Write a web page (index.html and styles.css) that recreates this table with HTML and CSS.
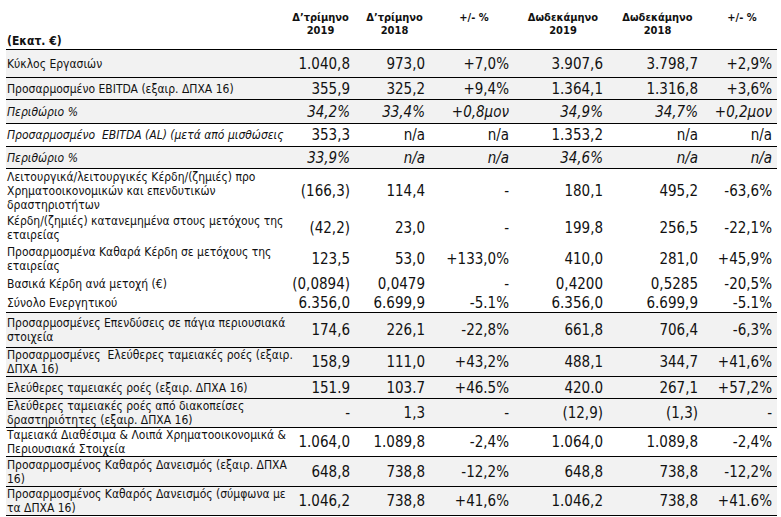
FILE: index.html
```html
<!DOCTYPE html>
<html lang="el">
<head>
<meta charset="utf-8">
<title>Οικονομικά Αποτελέσματα</title>
<link rel="stylesheet" href="styles.css">
</head>
<body>
<table class="fin">
  <colgroup>
    <col class="c-label">
    <col class="c1">
    <col class="c2">
    <col class="c3">
    <col class="c4">
    <col class="c5">
    <col class="c6">
  </colgroup>
  <thead>
    <tr class="head">
      <th class="lbl unit">(Εκατ. €)</th>
      <th>Δ’τρίμηνο<br>2019</th>
      <th>Δ’τρίμηνο<br>2018</th>
      <th>+/- %</th>
      <th>Δωδεκάμηνο<br>2019</th>
      <th>Δωδεκάμηνο<br>2018</th>
      <th>+/- %</th>
    </tr>
  </thead>
  <tbody>
    <tr class="g b h28"><td class="lbl">Κύκλος Εργασιών</td><td>1.040,8</td><td>973,0</td><td>+7,0%</td><td>3.907,6</td><td>3.798,7</td><td>+2,9%</td></tr>
    <tr class="g b h22"><td class="lbl">Προσαρμοσμένο EBITDA (εξαιρ. ΔΠΧΑ 16)</td><td>355,9</td><td>325,2</td><td>+9,4%</td><td>1.364,1</td><td>1.316,8</td><td>+3,6%</td></tr>
    <tr class="g b i h24"><td class="lbl">Περιθώριο %</td><td>34,2%</td><td>33,4%</td><td>+0,8μον</td><td>34,9%</td><td>34,7%</td><td>+0,2μον</td></tr>
    <tr class="b h23"><td class="lbl ital">Προσαρμοσμένο&nbsp; EBITDA (AL) (μετά από μισθώσεις</td><td>353,3</td><td>n/a</td><td>n/a</td><td>1.353,2</td><td>n/a</td><td>n/a</td></tr>
    <tr class="g b i h22"><td class="lbl">Περιθώριο %</td><td>33,9%</td><td>n/a</td><td>n/a</td><td>34,6%</td><td>n/a</td><td>n/a</td></tr>
    <tr class="h44"><td class="lbl">Λειτουργικά/λειτουργικές Κέρδη/(ζημιές) προ<br>Χρηματοοικονομικών και επενδυτικών<br>δραστηριοτήτων</td><td>(166,3)</td><td>114,4</td><td>-</td><td>180,1</td><td>495,2</td><td>-63,6%</td></tr>
    <tr class="h30"><td class="lbl">Κέρδη/(ζημιές) κατανεμημένα στους μετόχους της<br>εταιρείας</td><td>(42,2)</td><td>23,0</td><td>-</td><td>199,8</td><td>256,5</td><td>-22,1%</td></tr>
    <tr class="h31"><td class="lbl">Προσαρμοσμένα Καθαρά Κέρδη σε μετόχους της<br>εταιρείας</td><td>123,5</td><td>53,0</td><td>+133,0%</td><td>410,0</td><td>281,0</td><td>+45,9%</td></tr>
    <tr class="h20"><td class="lbl">Βασικά Κέρδη ανά μετοχή (€)</td><td>(0,0894)</td><td>0,0479</td><td>-</td><td>0,4200</td><td>0,5285</td><td>-20,5%</td></tr>
    <tr class="b h19"><td class="lbl">Σύνολο Ενεργητικού</td><td>6.356,0</td><td>6.699,9</td><td>-5.1%</td><td>6.356,0</td><td>6.699,9</td><td>-5.1%</td></tr>
    <tr class="g b h35"><td class="lbl">Προσαρμοσμένες Επενδύσεις σε πάγια περιουσιακά<br>στοιχεία</td><td>174,6</td><td>226,1</td><td>-22,8%</td><td>661,8</td><td>706,4</td><td>-6,3%</td></tr>
    <tr class="g b h28"><td class="lbl">Προσαρμοσμένες&nbsp; Ελεύθερες ταμειακές ροές (εξαιρ.<br>ΔΠΧΑ 16)</td><td>158,9</td><td>111,0</td><td>+43,2%</td><td>488,1</td><td>344,7</td><td>+41,6%</td></tr>
    <tr class="g b h22"><td class="lbl">Ελεύθερες ταμειακές ροές (εξαιρ. ΔΠΧΑ 16)</td><td>151.9</td><td>103.7</td><td>+46.5%</td><td>420.0</td><td>267,1</td><td>+57,2%</td></tr>
    <tr class="g b h27"><td class="lbl">Ελεύθερες ταμειακές ροές από διακοπείσες<br>δραστηριότητες (εξαιρ. ΔΠΧΑ 16)</td><td>-</td><td>1,3</td><td>-</td><td>(12,9)</td><td>(1,3)</td><td>-</td></tr>
    <tr class="b h29"><td class="lbl">Ταμειακά Διαθέσιμα &amp; Λοιπά Χρηματοοικονομικά &amp;<br>Περιουσιακά Στοιχεία</td><td>1.064,0</td><td>1.089,8</td><td>-2,4%</td><td>1.064,0</td><td>1.089,8</td><td>-2,4%</td></tr>
    <tr class="g b h30"><td class="lbl">Προσαρμοσμένος Καθαρός Δανεισμός (εξαιρ. ΔΠΧΑ<br>16)</td><td>648,8</td><td>738,8</td><td>-12,2%</td><td>648,8</td><td>738,8</td><td>-12,2%</td></tr>
    <tr class="g b h28"><td class="lbl">Προσαρμοσμένος Καθαρός Δανεισμός (σύμφωνα με<br>τα ΔΠΧΑ 16)</td><td>1.046,2</td><td>738,8</td><td>+41,6%</td><td>1.046,2</td><td>738,8</td><td>+41.6%</td></tr>
  </tbody>
</table>
</body>
</html>
```

FILE: styles.css
```css
html, body {
  margin: 0;
  padding: 0;
  background: #ffffff;
}

body {
  padding-left: 6px;
  font-family: "DejaVu Sans Condensed", "DejaVu Sans", sans-serif;
  font-stretch: condensed;
  color: #111111;
}

.fin {
  border-collapse: separate;
  border-spacing: 0;
  table-layout: fixed;
  width: 771px;
}

.c-label { width: 276px; }
.c1 { width: 73px; }
.c2 { width: 75px; }
.c3 { width: 84px; }
.c4 { width: 94px; }
.c5 { width: 95px; }
.c6 { width: 74px; }

.fin th {
  font-weight: bold;
  font-size: 11px;
  line-height: 13px;
  text-align: center;
  vertical-align: top;
  padding: 11px 0 0 4px;
  height: 50px;
  box-sizing: border-box;
  border-bottom: 1px solid #000;
}

.fin th.unit {
  text-align: left;
  vertical-align: bottom;
  padding: 0 0 1px 1px;
  font-size: 12px;
  line-height: 14px;
}

.fin td {
  font-size: 15px;
  line-height: 16px;
  text-align: right;
  vertical-align: middle;
  padding: 0 5px 0 0;
  white-space: nowrap;
}

.fin td.lbl {
  font-size: 12px;
  line-height: 14px;
  text-align: left;
  padding: 0 0 0 1px;
}

.g td { background: #f2f2f2; }
.b td { border-bottom: 1px solid #000; }
.i td { font-style: italic; }
.ital { font-style: italic; }

.h19 { height: 19px; }
.h20 { height: 20px; }
.h22 { height: 22px; }
.h23 { height: 23px; }
.h24 { height: 24px; }
.h27 { height: 27px; }
.h28 { height: 28px; }
.h29 { height: 29px; }
.h30 { height: 30px; }
.h31 { height: 31px; }
.h35 { height: 35px; }
.h44 { height: 44px; }
```
